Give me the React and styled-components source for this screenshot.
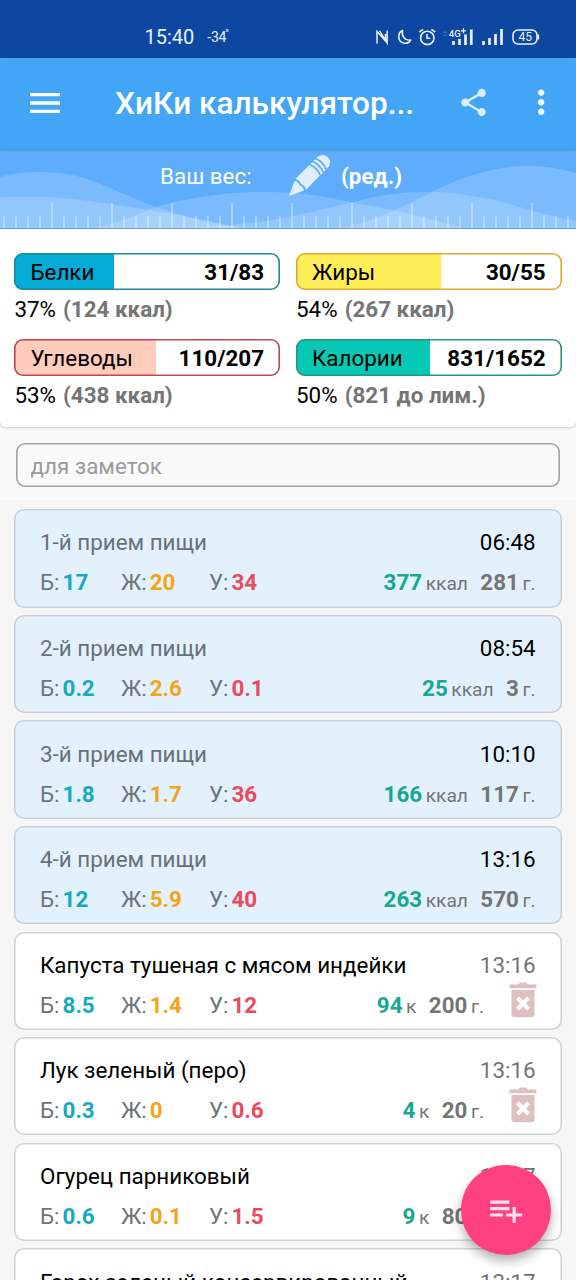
import styled, { createGlobalStyle } from "styled-components";

const GlobalStyle = createGlobalStyle`
  * {
    box-sizing: border-box;
  }
  body {
    margin: 0;
    background: #f6f6f6;
    font-family: Roboto, "Noto Sans", sans-serif;
    font-size: 22.4px;
    color: #000;
  }
`;

const Screen = styled.div`
  width: 576px;
  height: 1280px;
  overflow: hidden;
  display: flex;
  flex-direction: column;
`;

/* ---------- status bar ---------- */

const StatusBar = styled.div`
  height: 58px;
  flex-shrink: 0;
  display: flex;
  align-items: center;
  padding: 16px 36px 0 144.5px;
  background: #0d47a1;
  color: #e9f1fb;
`;

const Clock = styled.span`
  font-size: 20px;
  line-height: 24px;
`;

const Temperature = styled.span`
  display: flex;
  align-items: flex-start;
  margin-left: 13px;
  font-size: 14px;
  line-height: 20px;
  letter-spacing: -0.3px;
`;

const Degree = styled.span`
  font-size: 11px;
  line-height: 14px;
  margin-left: -1px;
`;

const StatusIcons = styled.svg`
  margin-left: auto;
  display: block;
`;

/* ---------- app bar ---------- */

const AppBar = styled.header`
  height: 91px;
  flex-shrink: 0;
  display: flex;
  align-items: center;
  padding: 0 16px 2px 25px;
  background: #42a5f5;
  color: #fff;
  position: relative;
  box-shadow: 0 1px 3px rgba(0, 0, 0, 0.22);
`;

const Title = styled.h1`
  flex: 1;
  margin: 3px 0 0 50px;
  font-size: 31.6px;
  font-weight: 500;
  line-height: 40px;
  white-space: nowrap;
`;

const BarIcon = styled.svg`
  display: block;
  fill: #fff;
  opacity: ${(p) => p.$opacity || 1};
  margin-right: ${(p) => p.$gap || 0}px;
`;

/* ---------- weight strip ---------- */

const WeightStrip = styled.div`
  height: 80px;
  flex-shrink: 0;
  display: grid;
  background: #5eadfd;
  color: #fff;
  border-bottom: 1px solid #6ea5dc;

  > * {
    grid-area: 1 / 1;
  }
`;

const WeightRow = styled.div`
  display: flex;
  align-items: flex-start;
  padding: 5px 0 0 160px;
  line-height: 44px;
`;

const WeightLabel = styled.span`
  width: 127px;
`;

const EditLabel = styled.span`
  margin-left: 10px;
  font-weight: 700;
`;

/* ---------- day totals ---------- */

const Totals = styled.section`
  height: 198px;
  flex-shrink: 0;
  display: grid;
  grid-template-columns: 265.6px 265.6px;
  grid-auto-rows: 86.3px;
  column-gap: 16px;
  padding: 23.8px 14.4px 0;
  background: #fff;
  border-radius: 0 0 6px 6px;
  box-shadow: 0 1px 3px rgba(0, 0, 0, 0.18);
  position: relative;
`;

const Meter = styled.div`
  height: 36.8px;
  display: flex;
  justify-content: space-between;
  padding: 1.4px 16px 0 16px;
  line-height: 36px;
  border-radius: 9px;
  background: linear-gradient(
    to right,
    ${(p) => p.$fill} ${(p) => p.$percent}%,
    #fff ${(p) => p.$percent}%
  );
  box-shadow: inset 0 0 0 1.6px ${(p) => p.$border};
`;

const MeterNote = styled.div`
  line-height: 26px;
  margin-top: 6px;

  b {
    margin-left: 1.5px;
    color: #757575;
  }
`;

/* ---------- notes ---------- */

const Notes = styled.div`
  height: 73px;
  flex-shrink: 0;
  padding: 16px;
  background: #fafafa;
`;

const NotesField = styled.input`
  display: block;
  width: 100%;
  height: 44px;
  padding: 1px 14.5px 0;
  border: 0;
  outline: 0;
  border-radius: 9px;
  background: transparent;
  box-shadow: inset 0 0 0 1.6px #a3a3a3;
  font: inherit;

  &::placeholder {
    color: #9b9b9b;
    opacity: 1;
  }
`;

/* ---------- meal list ---------- */

const List = styled.main`
  display: flex;
  flex-direction: column;
  gap: 7.2px;
  padding: 9.2px 14.4px 0;
`;

const Card = styled.article`
  height: 98.4px;
  flex-shrink: 0;
  padding: 19.3px 26px 0 25.6px;
  border-radius: 10px;
  background: ${(p) => (p.$meal ? "#e3f1fc" : "#fff")};
  box-shadow: inset 0 0 0 1.6px ${(p) => (p.$meal ? "#c8d1d9" : "#d2d2d2")};
`;

const CardTop = styled.div`
  display: flex;
  justify-content: space-between;
  line-height: 28px;
  white-space: nowrap;
`;

const Name = styled.span`
  color: ${(p) => (p.$meal ? "#66717b" : "#000")};
`;

const Time = styled.span`
  color: ${(p) => (p.$meal ? "#000" : "#757575")};
`;

const CardBottom = styled.div`
  display: flex;
  align-items: baseline;
  margin-top: 12px;
  line-height: 28px;
  color: #6d757c;
`;

const Macro = styled.span`
  width: ${(p) => p.$width}px;

  b {
    margin-left: 3px;
    color: ${(p) => p.$color};
  }
`;

const Amounts = styled.span`
  margin-left: auto;
  display: flex;
  align-items: baseline;
  color: #757575;

  small {
    margin-left: 3.6px;
    font-size: 19.2px;
  }
`;

const Kcal = styled.b`
  color: #16a890;
`;

const Grams = styled.b`
  margin-left: 12.400px;
`;

const TrashIcon = styled.svg`
  align-self: flex-start;
  flex-shrink: 0;
  margin: -9px -1px 0 24.5px;
  height: 36px;
`;

const Fab = styled.button`
  position: absolute;
  left: 461px;
  top: 1165px;
  width: 89.6px;
  height: 89.6px;
  display: flex;
  align-items: center;
  justify-content: center;
  padding: 0;
  border: 0;
  border-radius: 50%;
  background: #ff4081;
  box-shadow: 0 6px 11px rgba(0, 0, 0, 0.3);
`;

const totals = [
  { label: "Белки", value: "31/83", percent: 37.5, note: "(124 ккал)", fill: "#04abd4", border: "#20879c" },
  { label: "Жиры", value: "30/55", percent: 54.6, note: "(267 ккал)", fill: "#ffee58", border: "#e5a72c" },
  { label: "Углеводы", value: "110/207", percent: 53.3, note: "(438 ккал)", fill: "#ffccbc", border: "#bd4655" },
  { label: "Калории", value: "831/1652", percent: 50.4, note: "(821 до лим.)", fill: "#06c9b5", border: "#289583" },
];

const items = [
  { meal: true, name: "1-й прием пищи", time: "06:48", b: "17", j: "20", u: "34", kcal: "377", grams: "281" },
  { meal: true, name: "2-й прием пищи", time: "08:54", b: "0.2", j: "2.6", u: "0.1", kcal: "25", grams: "3" },
  { meal: true, name: "3-й прием пищи", time: "10:10", b: "1.8", j: "1.7", u: "36", kcal: "166", grams: "117" },
  { meal: true, name: "4-й прием пищи", time: "13:16", b: "12", j: "5.9", u: "40", kcal: "263", grams: "570" },
  { name: "Капуста тушеная с мясом индейки", time: "13:16", b: "8.5", j: "1.4", u: "12", kcal: "94", grams: "200" },
  { name: "Лук зеленый (перо)", time: "13:16", b: "0.3", j: "0", u: "0.6", kcal: "4", grams: "20" },
  { name: "Огурец парниковый", time: "13:17", b: "0.6", j: "0.1", u: "1.5", kcal: "9", grams: "80" },
  { name: "Горох зеленый консервированный", time: "13:17", b: "3.1", j: "0.2", u: "6.5", kcal: "40", grams: "100" },
];

const PhoneIcons = () => (
  <StatusIcons width="166" height="22" viewBox="374 26 166 22" fill="none" stroke="#e9f1fb" strokeWidth="1.6">
    {/* nfc */}
    <path d="M377 43.500V31.500L385.500 41V34M379.500 30.800L387.200 43V30.500" strokeWidth="1.5" />
    {/* do not disturb moon */}
    <path d="M402.500 30.500c-5.500 2.500-5 12.500 2.500 12.800c2.800 0 4.800-1.300 5.700-3.200c-5.500 1.200-9.500-4.200-8.200-9.600z" strokeLinejoin="round" />
    {/* alarm */}
    <circle cx="427.300" cy="37.900" r="6.700" />
    <path d="M427 34v4.200h3.200M419.300 32l3.800-2.700M435.200 32l-3.800-2.700" />
    {/* signal bars */}
    <path d="M453.500 41v4M459.500 39v6M465.500 34.500v10.500M471.300 29.500v15.500M483.500 41v4M489.500 38v7M495.500 34v11M501.500 29v16" strokeWidth="2.700" />
    <path d="M445 31.500v1.500M445 34.500v1.500" strokeWidth="3" opacity="0.25" />
    <text x="448.800" y="37" fontSize="9.500" fontWeight="500" fill="#e9f1fb" stroke="none">4G</text>
    <path d="M461 30.800h5M463.500 28.300v5" strokeWidth="1.300" />
    {/* battery */}
    <rect x="513" y="30" width="24" height="14" rx="5" />
    <path d="M538.300 34.500v5" />
    <text x="525.200" y="41.300" fontSize="12" textAnchor="middle" fill="#e9f1fb" stroke="none">45</text>
  </StatusIcons>
);

const ticks = Array.from({ length: 48 }, (_, i) => 4 + i * 12);

const Waves = () => (
  <svg width="576" height="79" viewBox="0 149 576 79">
    <g fill="#fff" fillOpacity="0.18">
      <path d="M0 177C20 171 45 171 67 174C90 178 115 190 133 198S175 214 200 220S235 227 255 229H0z" />
      <path d="M0 197.500C30 195 70 198 100 202.500S175 214 200 219S230 226 245 229H0z" />
      <path d="M88 229C115 225 140 213 157 207S220 192 262 192S320 196 345 201S385 208 410 214S445 223 468 229z" />
      <path d="M175 229C230 226 265 222 288 217S350 203 370 198S410 192 432 192S490 198 510 204S550 216 576 221V229z" />
      <path d="M335 229C375 222 405 206 430 193S490 166 527 166Q553 166 576 173V229z" />
    </g>
    <path
      d={ticks.map((x, i) => `M${x} ${i % 5 === 4 ? 203 : 216}V228`).join("")}
      stroke="#fff"
      strokeOpacity="0.42"
      strokeWidth="1.6"
    />
  </svg>
);

// drawn lying on its side, tip at the origin, then turned up by 45 degrees
const Pencil = () => (
  <svg width="44" height="44" viewBox="287 153 44 44" fill="#e1effd">
    <g transform="translate(289 195) rotate(-45)">
      <path d="M0 0L14.500-6.800Q17 -3.500 15 0Q17 3.500 14.500 6.800z" />
      <path d="M16.500-7.500H36Q39 0 36 7.500H16.500Q18.800 3.500 16.800 0Q18.800-3.500 16.500-7.500z" />
      <path d="M37.700-7.500H40.200Q43.200 0 40.200 7.500H37.700Q40.700 0 37.700-7.500z" />
      <path d="M41.900-7.500H44.400Q47.400 0 44.400 7.500H41.900Q44.900 0 41.900-7.500z" />
      <path d="M46.100-7.500H48.500Q54.800-6 54.800 0T48.500 7.500H46.100Q49.100 0 46.100-7.500z" />
    </g>
  </svg>
);

const Trash = () => (
  <TrashIcon width="28" viewBox="0 0 28 36">
    <path
      d="M0.500 2.500h8.500l2-2h6l2 2h8.500v3.800h-27zM2.500 8h23v24.500q0 2.800-2.800 2.800h-17.400q-2.800 0-2.800-2.800z"
      fill="#dfbfc2"
    />
    <path d="M8.500 16l11 11M19.500 16l-11 11" stroke="#fff" strokeWidth="4" />
  </TrashIcon>
);

const Entry = ({ item }) => (
  <Card $meal={item.meal}>
    <CardTop>
      <Name $meal={item.meal}>{item.name}</Name>
      <Time $meal={item.meal}>{item.time}</Time>
    </CardTop>
    <CardBottom>
      <Macro $width={81} $color="#16a9c4">Б:<b>{item.b}</b></Macro>
      <Macro $width={88} $color="#f5a31a">Ж:<b>{item.j}</b></Macro>
      <Macro $color="#ea4a5e">У:<b>{item.u}</b></Macro>
      <Amounts>
        <Kcal>{item.kcal}</Kcal>
        <small>{item.meal ? "ккал" : "к"}</small>
        <Grams>{item.grams}</Grams>
        <small>г.</small>
      </Amounts>
      {!item.meal && <Trash />}
    </CardBottom>
  </Card>
);

const App = () => {
  return (
    <>
      <GlobalStyle />
      <Screen>
        <StatusBar>
          <Clock>15:40</Clock>
          <Temperature>-34<Degree>°</Degree></Temperature>
          <PhoneIcons />
        </StatusBar>
        <AppBar>
          <BarIcon width="40" height="40" viewBox="0 0 24 24">
            <path d="M3 18h18v-2H3v2zm0-5h18v-2H3v2zm0-7v2h18V6H3z" />
          </BarIcon>
          <Title>ХиКи калькулятор...</Title>
          <BarIcon width="33" height="33" viewBox="0 0 24 24" $opacity={0.8} $gap={31.5}>
            <path d="M18 16.080c-.76 0-1.440.3-1.960.77L8.910 12.700c.05-.23.09-.46.09-.7s-.04-.47-.09-.7l7.050-4.110c.54.5 1.250.81 2.040.81 1.660 0 3-1.340 3-3s-1.340-3-3-3-3 1.340-3 3c0 .24.04.47.09.7L8.040 9.810C7.500 9.310 6.790 9 6 9c-1.660 0-3 1.340-3 3s1.340 3 3 3c.79 0 1.500-.31 2.040-.81l7.120 4.160c-.05.21-.08.43-.08.65 0 1.610 1.310 2.920 2.920 2.920s2.920-1.310 2.920-2.920-1.310-2.920-2.920-2.920z" />
          </BarIcon>
          <BarIcon width="38.4" height="38.4" viewBox="0 0 24 24">
            <path d="M12 8c1.100 0 2-.9 2-2s-.9-2-2-2-2 .9-2 2 .9 2 2 2zm0 2c-1.100 0-2 .9-2 2s.9 2 2 2 2-.9 2-2-.9-2-2-2zm0 6c-1.100 0-2 .9-2 2s.9 2 2 2 2-.9 2-2-.9-2-2-2z" />
          </BarIcon>
        </AppBar>
        <WeightStrip>
          <Waves />
          <WeightRow>
            <WeightLabel>Ваш вес:</WeightLabel>
            <Pencil />
            <EditLabel>(ред.)</EditLabel>
          </WeightRow>
        </WeightStrip>
        <Totals>
          {totals.map((t) => (
            <div key={t.label}>
              <Meter $fill={t.fill} $border={t.border} $percent={t.percent}>
                <span>{t.label}</span>
                <b>{t.value}</b>
              </Meter>
              <MeterNote>
                {Math.floor(t.percent)}% <b>{t.note}</b>
              </MeterNote>
            </div>
          ))}
        </Totals>
        <Notes>
          <NotesField placeholder="для заметок" />
        </Notes>
        <List>
          {items.map((item) => (
            <Entry key={item.name} item={item} />
          ))}
        </List>
        <Fab aria-label="Добавить">
          <svg width="38.4" height="38.4" viewBox="0 0 24 24" fill="#ffe3ec">
            <path d="M14 10H2v2h12v-2zm0-4H2v2h12V6zm4 8v-4h-2v4h-4v2h4v4h2v-4h4v-2h-4zM2 16h8v-2H2v2z" />
          </svg>
        </Fab>
      </Screen>
    </>
  );
};

export default App;
